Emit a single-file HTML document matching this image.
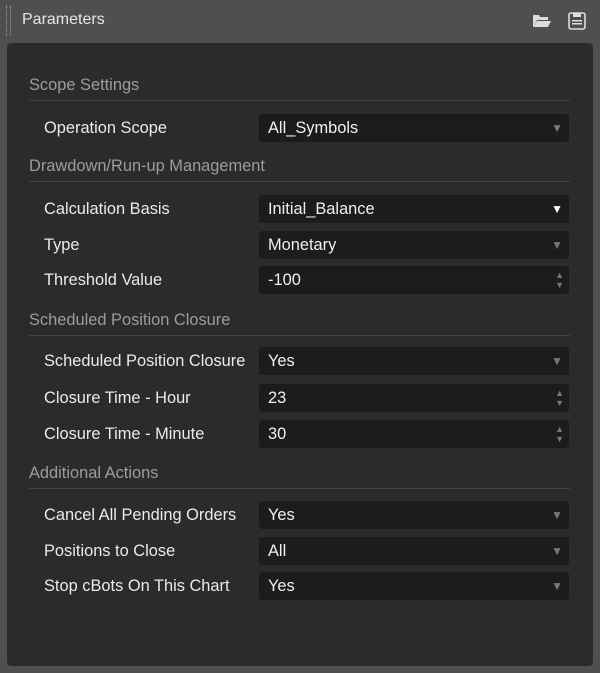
<!DOCTYPE html>
<html><head><style>
body{margin:0;width:600px;height:673px;background:#4f4f4f;font-family:"Liberation Sans",sans-serif;position:relative;overflow:hidden}
.grip{position:absolute;left:6px;top:6px;width:3px;height:30px;border-left:1px dotted #999;border-right:1px dotted #999}
.title{position:absolute;left:22px;top:11px;font-size:16px;color:#e6e6e6}
.panel{position:absolute;left:7px;top:43px;width:586px;height:623px;background:#2b2b2b;border-radius:4px}
.sec{position:absolute;left:29px;width:541px;font-size:16.4px;color:#9c9c9c;border-bottom:1px solid #444;height:24px}
.lab{position:absolute;left:44px;font-size:16.4px;color:#eaeaea}
.f{position:absolute;left:259px;width:310px;height:28px;background:#1c1c1c;border-radius:3px;color:#f0f0f0;font-size:16.4px;line-height:28px;text-indent:9px}
.arr{position:absolute;right:6px;top:0;font-size:12px;line-height:28px;color:#777;text-indent:0}
.arr.w{color:#fff}
.sp{position:absolute;right:5px;top:4px;font-size:9px;line-height:10px;color:#777;text-indent:0}
</style></head><body>
<div class="grip"></div>
<div class="title">Parameters</div>
<svg style="position:absolute;left:532px;top:13px" width="20" height="16" viewBox="0 0 20 16"><path d="M1 2h6l1 2h8v3H5L2 14H1z" fill="#ddd"/><path d="M5 8h14l-3 6H2z" fill="#ddd"/></svg>
<svg style="position:absolute;left:568px;top:12px" width="18" height="18" viewBox="0 0 18 18"><rect x="1" y="1" width="16" height="16" rx="2" fill="none" stroke="#ddd" stroke-width="1.6"/><rect x="5" y="1" width="8" height="4" fill="#ddd"/><rect x="4" y="8" width="10" height="1.5" fill="#ddd"/><rect x="4" y="11" width="10" height="1.5" fill="#ddd"/></svg>
<div class="panel"></div>
<div class="sec" style="top:76px">Scope Settings</div>
<div class="lab" style="top:119px">Operation Scope</div>
<div class="f" style="top:114px">All_Symbols<span class="arr">▼</span></div>
<div class="sec" style="top:157px">Drawdown/Run-up Management</div>
<div class="lab" style="top:200px">Calculation Basis</div>
<div class="f" style="top:195px">Initial_Balance<span class="arr w">▼</span></div>
<div class="lab" style="top:236px">Type</div>
<div class="f" style="top:231px">Monetary<span class="arr">▼</span></div>
<div class="lab" style="top:271px">Threshold Value</div>
<div class="f" style="top:266px">-100<span class="sp">▲<br>▼</span></div>
<div class="sec" style="top:311px">Scheduled Position Closure</div>
<div class="lab" style="top:352px">Scheduled Position Closure</div>
<div class="f" style="top:347px">Yes<span class="arr">▼</span></div>
<div class="lab" style="top:389px">Closure Time - Hour</div>
<div class="f" style="top:384px">23<span class="sp">▲<br>▼</span></div>
<div class="lab" style="top:425px">Closure Time - Minute</div>
<div class="f" style="top:420px">30<span class="sp">▲<br>▼</span></div>
<div class="sec" style="top:464px">Additional Actions</div>
<div class="lab" style="top:506px">Cancel All Pending Orders</div>
<div class="f" style="top:501px">Yes<span class="arr">▼</span></div>
<div class="lab" style="top:542px">Positions to Close</div>
<div class="f" style="top:537px">All<span class="arr">▼</span></div>
<div class="lab" style="top:577px">Stop cBots On This Chart</div>
<div class="f" style="top:572px">Yes<span class="arr">▼</span></div>
</body></html>
